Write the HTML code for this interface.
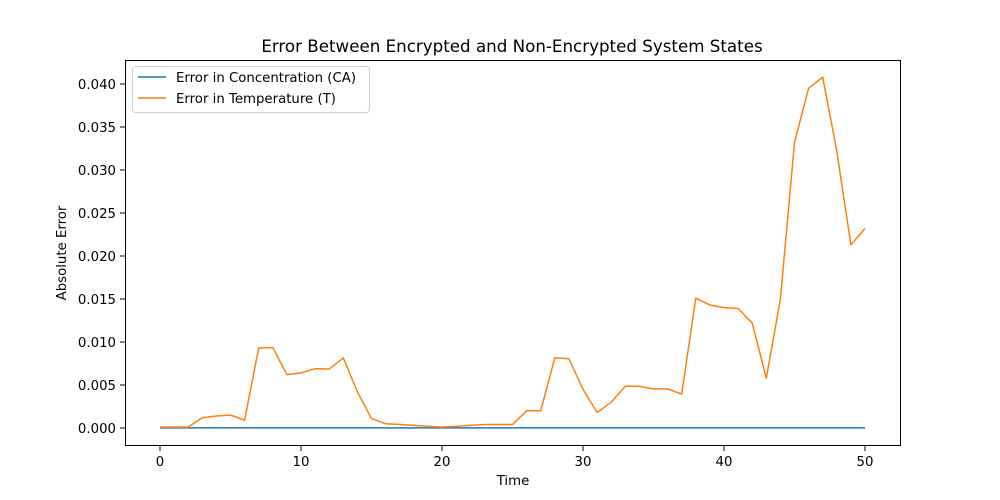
<!DOCTYPE html>
<html><head><meta charset="utf-8"><style>
body{margin:0;background:#fff}
svg{display:block}
text{font-family:"DejaVu Sans","Liberation Sans",sans-serif;fill:#000}
</style></head><body>
<svg width="1000" height="500" viewBox="0 0 1000 500" xmlns="http://www.w3.org/2000/svg">
<rect width="1000" height="500" fill="#fff"/>
<text x="512" y="52" font-size="16.7" text-anchor="middle">Error Between Encrypted and Non-Encrypted System States</text>
<g transform="translate(160,428) scale(14.1,-8.6)">
<polyline vector-effect="non-scaling-stroke" fill="none" stroke="#1f77b4" stroke-width="1.5" points="0,0.02 50,0.02"/>
<polyline vector-effect="non-scaling-stroke" fill="none" stroke="#ff7f0e" stroke-width="1.5" stroke-linejoin="round" points="0,0.1 1,0.1 2,0.1 3,1.2 4,1.4 5,1.5 6,0.9 7,9.3 8,9.35 9,6.2 10,6.4 11,6.9 12,6.85 13,8.15 14,4.2 15,1.1 16,0.5 17,0.4 18,0.3 19,0.2 20,0.1 21,0.2 22,0.3 23,0.4 24,0.4 25,0.4 26,2.0 27,2.0 28,8.15 29,8.05 30,4.5 31,1.8 32,3.0 33,4.85 34,4.85 35,4.55 36,4.55 37,3.95 38,15.1 39,14.3 40,14.0 41,13.9 42,12.2 43,5.8 44,15.0 45,33.2 46,39.5 47,40.8 48,32.2 49,21.3 50,23.2"/>
</g>
<rect x="125.5" y="60.5" width="775" height="385" fill="none" stroke="#000" stroke-width="1"/>
<g stroke="#000" stroke-width="1">
<line x1="160" y1="446" x2="160" y2="451"/><line x1="301" y1="446" x2="301" y2="451"/><line x1="442" y1="446" x2="442" y2="451"/><line x1="583" y1="446" x2="583" y2="451"/><line x1="724" y1="446" x2="724" y2="451"/><line x1="865" y1="446" x2="865" y2="451"/>
<line x1="120" y1="428" x2="125" y2="428"/><line x1="120" y1="385" x2="125" y2="385"/><line x1="120" y1="342" x2="125" y2="342"/><line x1="120" y1="299" x2="125" y2="299"/><line x1="120" y1="256" x2="125" y2="256"/><line x1="120" y1="213" x2="125" y2="213"/><line x1="120" y1="170" x2="125" y2="170"/><line x1="120" y1="127" x2="125" y2="127"/><line x1="120" y1="84" x2="125" y2="84"/>
</g>
<g font-size="13.3" text-anchor="middle">
<text x="160" y="466">0</text><text x="301" y="466">10</text><text x="442" y="466">20</text><text x="583" y="466">30</text><text x="724" y="466">40</text><text x="865" y="466">50</text>
<text x="513" y="485">Time</text>
</g>
<g font-size="13.3" text-anchor="end">
<text x="116" y="433">0.000</text><text x="116" y="390">0.005</text><text x="116" y="347">0.010</text><text x="116" y="304">0.015</text><text x="116" y="261">0.020</text><text x="116" y="218">0.025</text><text x="116" y="175">0.030</text><text x="116" y="132">0.035</text><text x="116" y="89">0.040</text>
</g>
<text font-size="13.3" text-anchor="middle" transform="translate(66,253) rotate(-90)">Absolute Error</text>
<rect x="132.5" y="66.5" width="237" height="46" rx="3" fill="#fff" fill-opacity="0.8" stroke="#ccc"/>
<line x1="138" y1="77" x2="166" y2="77" stroke="#1f77b4" stroke-width="1.5"/>
<line x1="138" y1="98" x2="166" y2="98" stroke="#ff7f0e" stroke-width="1.5"/>
<text x="176" y="82" font-size="13.3">Error in Concentration (CA)</text>
<text x="176" y="103" font-size="13.3">Error in Temperature (T)</text>
</svg>
</body></html>
